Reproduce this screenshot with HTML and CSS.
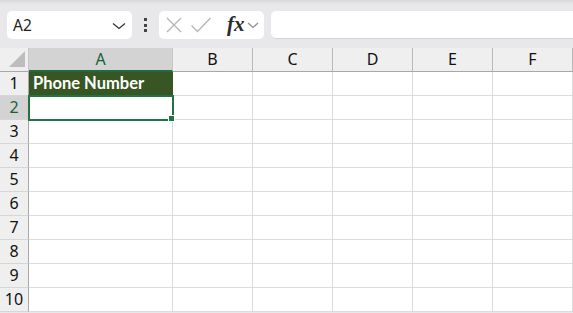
FILE: index.html
```html
<!DOCTYPE html>
<html lang="en">
<head>
  <meta charset="UTF-8" />
  <title>Sheet1</title>
  <link rel="stylesheet" href="styles.css">
</head>
<body>
  <div class="top-edge"></div>

  <div class="formula-bar">
    <div class="name-box">
      <span>A2</span>
      <svg class="chev" width="14" height="8" viewBox="0 0 14 8"><path d="M1 1.5 L7 6.5 L13 1.5" fill="none" stroke="#333" stroke-width="1.3"/></svg>
    </div>
    <div class="dots"><i></i><i></i><i></i></div>
    <div class="fn-box">
      <svg width="18" height="18" viewBox="0 0 18 18"><path d="M2 2 L16 16 M16 2 L2 16" stroke="#b4b4b4" stroke-width="1.3" fill="none"/></svg>
      <svg width="22" height="18" viewBox="0 0 22 18"><path d="M1.5 9.5 L7.5 15.5 L20.5 2" stroke="#b4b4b4" stroke-width="1.3" fill="none"/></svg>
      <span class="fx">fx</span>
      <svg width="12" height="8" viewBox="0 0 12 8"><path d="M1 2 L6 6.5 L11 2" fill="none" stroke="#8a8a8a" stroke-width="1.2"/></svg>
    </div>
    <div class="formula-input"></div>
  </div>

  <div class="sheet">
    <div class="corner"><svg width="18" height="18" viewBox="0 0 18 18"><path d="M17 1 L17 17 L1 17 Z" fill="#bdbdbd"/></svg></div>
    <div class="col-head active">A</div>
    <div class="col-head">B</div>
    <div class="col-head">C</div>
    <div class="col-head">D</div>
    <div class="col-head">E</div>
    <div class="col-head">F</div>

    <div class="row-head">1</div>
    <div class="cell title">Phone Number</div>
    <div class="cell"></div><div class="cell"></div><div class="cell"></div><div class="cell"></div><div class="cell"></div>

    <div class="row-head active">2</div>
    <div class="cell selected"></div>
    <div class="cell"></div><div class="cell"></div><div class="cell"></div><div class="cell"></div><div class="cell"></div>

    <div class="row-head">3</div>
    <div class="cell"></div><div class="cell"></div><div class="cell"></div><div class="cell"></div><div class="cell"></div><div class="cell"></div>
    <div class="row-head">4</div>
    <div class="cell"></div><div class="cell"></div><div class="cell"></div><div class="cell"></div><div class="cell"></div><div class="cell"></div>
    <div class="row-head">5</div>
    <div class="cell"></div><div class="cell"></div><div class="cell"></div><div class="cell"></div><div class="cell"></div><div class="cell"></div>
    <div class="row-head">6</div>
    <div class="cell"></div><div class="cell"></div><div class="cell"></div><div class="cell"></div><div class="cell"></div><div class="cell"></div>
    <div class="row-head">7</div>
    <div class="cell"></div><div class="cell"></div><div class="cell"></div><div class="cell"></div><div class="cell"></div><div class="cell"></div>
    <div class="row-head">8</div>
    <div class="cell"></div><div class="cell"></div><div class="cell"></div><div class="cell"></div><div class="cell"></div><div class="cell"></div>
    <div class="row-head">9</div>
    <div class="cell"></div><div class="cell"></div><div class="cell"></div><div class="cell"></div><div class="cell"></div><div class="cell"></div>
    <div class="row-head">10</div>
    <div class="cell"></div><div class="cell"></div><div class="cell"></div><div class="cell"></div><div class="cell"></div><div class="cell"></div>
  </div>
</body>
</html>
```
FILE: styles.css
```css
body, html {
  margin: 0;
  padding: 0;
  overflow: hidden;
  background: #e8e7e9;
  font-family: 'Noto Sans', sans-serif;
  color: #222;
}

.top-edge {
  height: 11px;
  background: linear-gradient(#d6d5d7, #e8e7e9 4px);
}

.formula-bar {
  display: flex;
  align-items: center;
  height: 28px;
  padding-left: 7px;
  margin-bottom: 9px;
}

.name-box {
  box-sizing: border-box;
  width: 125px;
  height: 28px;
  background: #fff;
  border-radius: 5px;
  display: flex;
  align-items: center;
  justify-content: space-between;
  padding: 0 6px 0 6px;
  font-size: 15.5px;
}

.name-box .chev {
  margin-top: 1px;
}

.dots {
  width: 27px;
  display: flex;
  flex-direction: column;
  align-items: center;
  gap: 2.5px;
}

.dots i {
  width: 3px;
  height: 3px;
  background: #444;
}

.fn-box {
  box-sizing: border-box;
  width: 105px;
  height: 28px;
  background: #fff;
  border-radius: 5px;
  display: flex;
  align-items: center;
  padding-left: 6px;
  gap: 7px;
}

.fn-box .fx {
  font-family: 'Liberation Serif', serif;
  font-style: italic;
  font-weight: bold;
  font-size: 21px;
  color: #2b2b2b;
  margin-left: 8px;
  margin-right: -5px;
  margin-top: -2px;
}

.formula-input {
  flex: 1;
  height: 27px;
  margin-left: 7px;
  background: #fff;
  border-radius: 5px 0 0 5px;
  border-bottom: 1px solid #d3d2d4;
}

.sheet {
  display: grid;
  grid-template-columns: 29px 144px 80px 80px 80px 80px 80px;
  grid-auto-rows: 24px;
  background: #fff;
}

.sheet > div {
  box-sizing: border-box;
}

.corner {
  background: #efefef;
  border-right: 1px solid #c6c6c6;
  border-bottom: 1px solid #a8a8a8;
  display: flex;
  align-items: flex-end;
  justify-content: flex-end;
  padding: 0 2px 3px 0;
}

.col-head {
  background: #efefef;
  border-right: 1px solid #b8b8b8;
  border-bottom: 1px solid #a8a8a8;
  text-align: center;
  font-size: 16px;
  line-height: 23px;
  color: #111;
}

.col-head.active {
  background: #d3d3d3;
  color: #16603a;
  border-bottom: 2px solid #1e6b3c;
  border-right-color: #c6c6c6;
}

.row-head {
  background: #efefef;
  border-right: 1px solid #a8a8a8;
  border-bottom: 1px solid #d6d6d6;
  text-align: center;
  font-size: 16px;
  line-height: 23px;
  color: #111;
}

.row-head.active {
  background: #d3d3d3;
  color: #16603a;
}

.cell {
  border-right: 1px solid #dcdcdc;
  border-bottom: 1px solid #dcdcdc;
}

.cell.title {
  background: #375623;
  color: #fff;
  font-family: 'Lato', sans-serif;
  font-weight: bold;
  font-size: 16.5px;
  line-height: 23px;
  padding-left: 4px;
  border-color: #375623;
}

.cell.selected {
  position: relative;
  outline: 2px solid #217346;
  outline-offset: -1px;
}

.cell.selected::after {
  content: "";
  position: absolute;
  right: -3px;
  bottom: -3px;
  width: 5px;
  height: 5px;
  background: #217346;
  border: 1px solid #fff;
}
```
